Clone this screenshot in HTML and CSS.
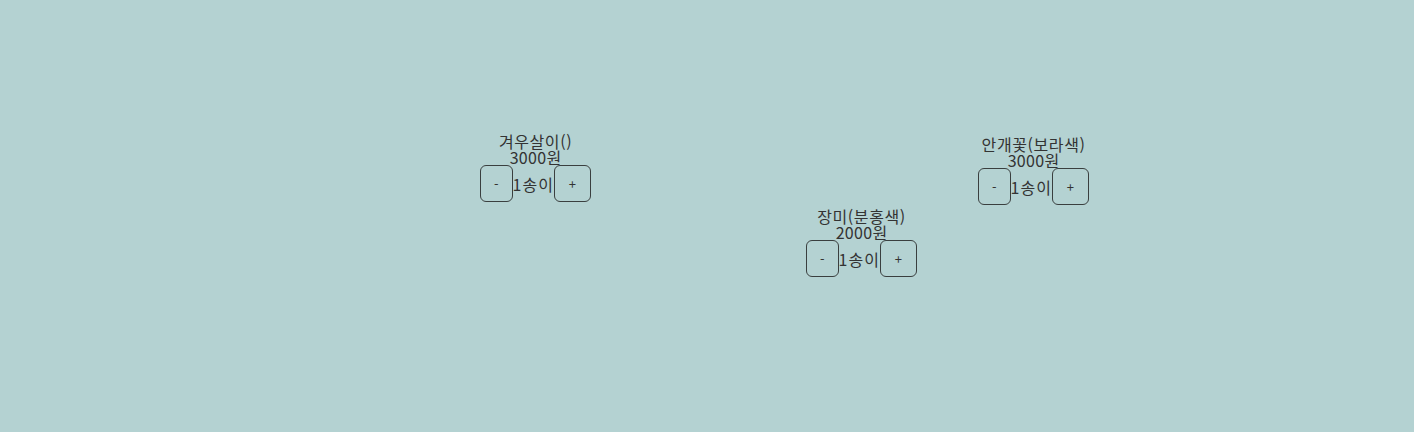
FILE: index.html
```html
<!DOCTYPE html>
<html lang="ko">
<head>
    <meta charset="UTF-8">
    <title>꽃 고르기</title>
    <link rel="stylesheet" href="styles.css">
</head>
<body>
    <main class="field">
        <div class="flower" style="left: 480px; top: 133px;">
            <p class="name">겨우살이()</p>
            <p class="price">3000원</p>
            <div class="count">
                <button class="count-btn">-</button>
                <span class="qty">1송이</span>
                <button class="count-btn plus">+</button>
            </div>
        </div>

        <div class="flower" style="left: 806px; top: 208px;">
            <p class="name">장미(분홍색)</p>
            <p class="price">2000원</p>
            <div class="count">
                <button class="count-btn">-</button>
                <span class="qty">1송이</span>
                <button class="count-btn plus">+</button>
            </div>
        </div>

        <div class="flower" style="left: 978px; top: 136px;">
            <p class="name">안개꽃(보라색)</p>
            <p class="price">3000원</p>
            <div class="count">
                <button class="count-btn">-</button>
                <span class="qty">1송이</span>
                <button class="count-btn plus">+</button>
            </div>
        </div>
    </main>
</body>
</html>
```

FILE: styles.css
```css
/* General Styles */
body {
    margin: 0;
    padding: 0;
    background-color: #b4d2d2;
    color: #333333;
    font-family: "Noto Sans CJK KR", "Noto Sans", sans-serif;
    font-size: 16px;
}

.field {
    position: relative;
    width: 1414px;
    height: 432px;
}

/* each flower sits where it was dropped */
.flower {
    position: absolute;
    display: flex;
    flex-direction: column;
    align-items: center;
    line-height: 16px;
}

.name,
.price {
    margin: 0;
    white-space: nowrap;
}

.name {
    letter-spacing: 0.6px;
}

.price {
    letter-spacing: 0.3px;
}

.count {
    display: flex;
    align-items: center;
}

.qty {
    white-space: nowrap;
    letter-spacing: 1px;
}

.count-btn {
    background: transparent;
    color: #333333;
    border: 1px solid #3a3f3f;
    border-radius: 6px;
    padding: 9px 13px;
    font-family: "Noto Sans CJK KR", "Noto Sans", sans-serif;
    font-size: 13px;
    line-height: 17px;
    cursor: pointer;
}

.count-btn.plus {
    padding: 9px 14px;
}
```
